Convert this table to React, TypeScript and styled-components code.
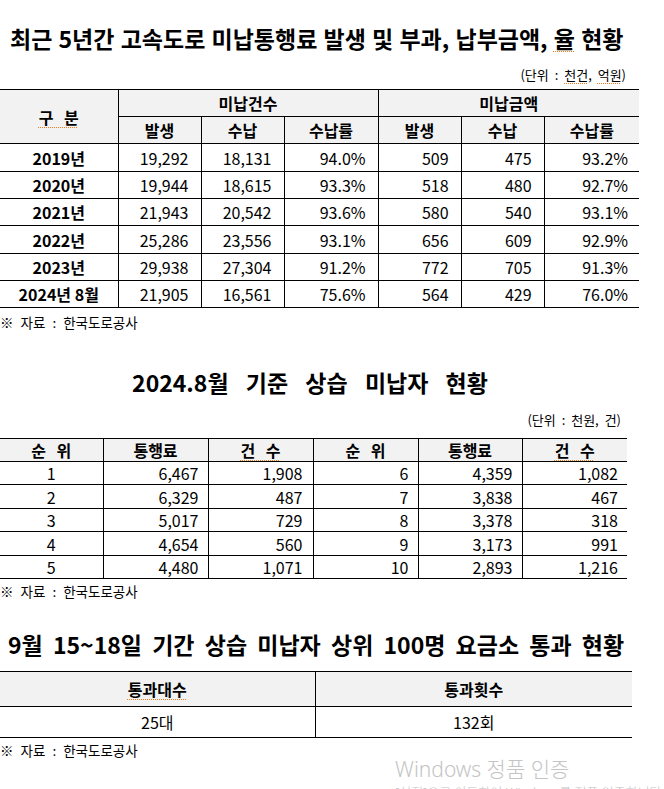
import React from "react";
import styled, { createGlobalStyle } from "styled-components";

const GlobalStyle = createGlobalStyle`
  html, body { margin: 0; padding: 0; background: #fff; }
  body {
    font-family: "Noto Sans CJK KR", "Noto Sans", sans-serif;
    color: #000;
  }
`;

const Page = styled.div`
  position: relative;
  width: 664px;
  height: 789px;
  overflow: hidden;
  display: flex;
  flex-direction: column;
`;

const Title = styled.h1<{ $top: number; $center?: boolean; $indent?: number; $ws?: number; $ls?: number }>`
  margin: ${(p) => p.$top}px 0 0;
  padding-left: ${(p) => p.$indent ?? 0}px;
  font-size: 23px;
  font-weight: 700;
  line-height: 32px;
  height: 32px;
  text-align: ${(p) => (p.$center ? "center" : "left")};
  word-spacing: ${(p) => p.$ws ?? 0}px;
  letter-spacing: ${(p) => p.$ls ?? 0}px;
  white-space: nowrap;
`;

const Unit = styled.div<{ $top: number; $right: number }>`
  margin-top: ${(p) => p.$top}px;
  padding-right: ${(p) => p.$right}px;
  text-align: right;
  font-size: 13px;
  line-height: 18px;
  height: 18px;
  word-spacing: 3px;
  white-space: nowrap;
`;

const Source = styled.div<{ $top: number }>`
  margin-top: ${(p) => p.$top}px;
  font-size: 13.5px;
  line-height: 18px;
  height: 18px;
  word-spacing: 4px;
  white-space: nowrap;
`;

const Spell = styled.span`
  text-decoration: underline dotted #f07c1e;
  text-decoration-thickness: 1px;
  text-underline-offset: 3px;
`;

const Table = styled.table<{ $width: number; $top: number }>`
  border-collapse: collapse;
  table-layout: fixed;
  width: ${(p) => p.$width}px;
  margin-top: ${(p) => p.$top}px;
  font-size: 16px;
  flex: none;
`;

const Row = styled.tr<{ $h: number }>`
  height: ${(p) => p.$h}px;
`;

const Head = styled.th<{ $noLeft?: boolean; $noRight?: boolean; $weight?: number }>`
  background: #f2f2f2;
  font-weight: ${(p) => p.$weight ?? 700};
  border: 1px solid #000;
  border-left: ${(p) => (p.$noLeft ? "none" : "1px solid #000")};
  border-right: ${(p) => (p.$noRight ? "none" : "1px solid #000")};
  padding: 0;
  text-align: center;
  vertical-align: middle;
  line-height: 1;
  word-spacing: 7px;
  white-space: nowrap;
`;

const Cell = styled.td<{ $align?: "left" | "right" | "center"; $bold?: boolean; $noLeft?: boolean; $noRight?: boolean; $pad?: number }>`
  border: 1px solid #000;
  border-left: ${(p) => (p.$noLeft ? "none" : "1px solid #000")};
  border-right: ${(p) => (p.$noRight ? "none" : "1px solid #000")};
  padding: 0 ${(p) => p.$pad ?? 11}px 0 0;
  text-align: ${(p) => p.$align ?? "right"};
  font-weight: ${(p) => (p.$bold ? 700 : 400)};
  vertical-align: middle;
  line-height: 1;
  white-space: nowrap;
`;

const CenterCell = styled(Cell)`
  padding: 0;
`;

const Watermark = styled.div`
  position: absolute;
  left: 395px;
  top: 755px;
  color: #c4c4c4;
  font-family: "Noto Sans", "Noto Sans CJK KR", sans-serif;
  font-weight: 300;
  white-space: nowrap;
`;

const WatermarkTitle = styled.div`
  font-size: 21px;
  line-height: 29px;
`;

const WatermarkSub = styled.div`
  font-size: 13px;
  line-height: 16px;
`;

const yearRows = [
  ["2019년", "19,292", "18,131", "94.0%", "509", "475", "93.2%"],
  ["2020년", "19,944", "18,615", "93.3%", "518", "480", "92.7%"],
  ["2021년", "21,943", "20,542", "93.6%", "580", "540", "93.1%"],
  ["2022년", "25,286", "23,556", "93.1%", "656", "609", "92.9%"],
  ["2023년", "29,938", "27,304", "91.2%", "772", "705", "91.3%"],
  ["2024년 8월", "21,905", "16,561", "75.6%", "564", "429", "76.0%"],
];
const yearHeights = [28, 27, 27, 28, 27, 27];

const rankRows = [
  ["1", "6,467", "1,908", "6", "4,359", "1,082"],
  ["2", "6,329", "487", "7", "3,838", "467"],
  ["3", "5,017", "729", "8", "3,378", "318"],
  ["4", "4,654", "560", "9", "3,173", "991"],
  ["5", "4,480", "1,071", "10", "2,893", "1,216"],
];
const rankHeights = [23, 24, 23, 24, 23];

export default function App() {
  return (
    <>
      <GlobalStyle />
      <Page>
        <Title $top={22} $indent={10} $ws={1}>
          최근 5년간 고속도로 미납통행료 발생 및 부과, 납부금액, <Spell>율</Spell> 현황
        </Title>
        <Unit $top={12} $right={38}>
          (단위 : <Spell>천건</Spell>, <Spell>억원</Spell>)
        </Unit>
        <Table $width={639} $top={5}>
          <colgroup>
            <col style={{ width: 118 }} />
            <col style={{ width: 83 }} />
            <col style={{ width: 83 }} />
            <col style={{ width: 94 }} />
            <col style={{ width: 83 }} />
            <col style={{ width: 83 }} />
            <col style={{ width: 95 }} />
          </colgroup>
          <thead>
            <Row $h={27}>
              <Head rowSpan={2} $noLeft>
                <Spell>구 분</Spell>
              </Head>
              <Head colSpan={3}>미납건수</Head>
              <Head colSpan={3} $noRight>
                미납금액
              </Head>
            </Row>
            <Row $h={27}>
              <Head>발생</Head>
              <Head>수납</Head>
              <Head>수납률</Head>
              <Head>발생</Head>
              <Head>수납</Head>
              <Head $noRight>수납률</Head>
            </Row>
          </thead>
          <tbody>
            {yearRows.map((r, i) => (
              <Row key={r[0]} $h={yearHeights[i]}>
                <CenterCell $align="center" $bold $noLeft>
                  {r[0]}
                </CenterCell>
                {r.slice(1).map((v, j) => (
                  <Cell key={j} $pad={j === 5 ? 11 : 12} $noRight={j === 5}>
                    {v}
                  </Cell>
                ))}
              </Row>
            ))}
          </tbody>
        </Table>
        <Source $top={5}>※ 자료 : 한국도로공사</Source>

        <Title $top={35} $center $ws={12} style={{ width: 620 }}>
          2024.8월 기준 상습 미납자 현황
        </Title>
        <Unit $top={13} $right={43}>
          (단위 : 천원, 건)
        </Unit>
        <Table $width={627} $top={9}>
          <colgroup>
            <col style={{ width: 103 }} />
            <col style={{ width: 105 }} />
            <col style={{ width: 105 }} />
            <col style={{ width: 105 }} />
            <col style={{ width: 104 }} />
            <col style={{ width: 105 }} />
          </colgroup>
          <thead>
            <Row $h={23}>
              <Head $noLeft>순 위</Head>
              <Head>통행료</Head>
              <Head>
                <Spell>건 수</Spell>
              </Head>
              <Head>순 위</Head>
              <Head>통행료</Head>
              <Head $noRight>
                <Spell>건 수</Spell>
              </Head>
            </Row>
          </thead>
          <tbody>
            {rankRows.map((r, i) => (
              <Row key={r[0]} $h={rankHeights[i]}>
                <CenterCell $align="center" $noLeft>
                  {r[0]}
                </CenterCell>
                <Cell $pad={9}>{r[1]}</Cell>
                <Cell $pad={10}>{r[2]}</Cell>
                <Cell $pad={9}>{r[3]}</Cell>
                <Cell $pad={9}>{r[4]}</Cell>
                <Cell $pad={9} $noRight>
                  {r[5]}
                </Cell>
              </Row>
            ))}
          </tbody>
        </Table>
        <Source $top={3}>※ 자료 : 한국도로공사</Source>

        <Title $top={28} $indent={8} $ws={5}>
          9월 15~18일 기간 상습 미납자 상위 100명 요금소 통과 현황
        </Title>
        <Table $width={632} $top={11}>
          <colgroup>
            <col style={{ width: 315 }} />
            <col style={{ width: 317 }} />
          </colgroup>
          <thead>
            <Row $h={35}>
              <Head $noLeft $weight={600}>
                <Spell>통과대수</Spell>
              </Head>
              <Head $noRight $weight={600}>
                통과횟수
              </Head>
            </Row>
          </thead>
          <tbody>
            <Row $h={31}>
              <CenterCell $align="center" $noLeft>
                25대
              </CenterCell>
              <CenterCell $align="center" $noRight>
                132회
              </CenterCell>
            </Row>
          </tbody>
        </Table>
        <Source $top={3}>※ 자료 : 한국도로공사</Source>

        <Watermark>
          <WatermarkTitle>Windows 정품 인증</WatermarkTitle>
          <WatermarkSub>[설정]으로 이동하여 Windows를 정품 인증합니다.</WatermarkSub>
        </Watermark>
      </Page>
    </>
  );
}
